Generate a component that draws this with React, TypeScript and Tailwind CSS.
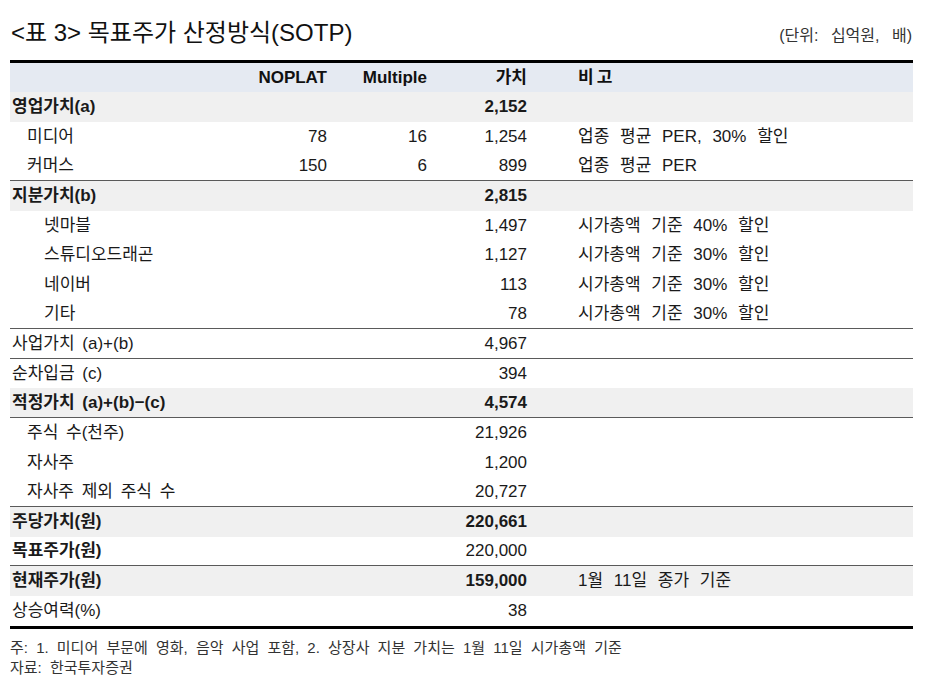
import React from 'react';

type Row = {
    label: string;
    indent?: 0 | 1 | 2;
    bold?: boolean;
    shaded?: boolean;
    boldValue?: boolean;
    noplat?: string;
    multiple?: string;
    value: string;
    note?: string;
    lineBelow?: boolean;
};

const ROWS: Row[] = [
    { label: '영업가치(a)', bold: true, shaded: true, boldValue: true, value: '2,152' },
    { label: '미디어', indent: 1, noplat: '78', multiple: '16', value: '1,254', note: '업종 평균 PER, 30% 할인' },
    { label: '커머스', indent: 1, noplat: '150', multiple: '6', value: '899', note: '업종 평균 PER', lineBelow: true },
    { label: '지분가치(b)', bold: true, shaded: true, boldValue: true, value: '2,815' },
    { label: '넷마블', indent: 2, value: '1,497', note: '시가총액 기준 40% 할인' },
    { label: '스튜디오드래곤', indent: 2, value: '1,127', note: '시가총액 기준 30% 할인' },
    { label: '네이버', indent: 2, value: '113', note: '시가총액 기준 30% 할인' },
    { label: '기타', indent: 2, value: '78', note: '시가총액 기준 30% 할인', lineBelow: true },
    { label: '사업가치 (a)+(b)', value: '4,967', lineBelow: true },
    { label: '순차입금 (c)', value: '394' },
    { label: '적정가치 (a)+(b)−(c)', bold: true, shaded: true, boldValue: true, value: '4,574', lineBelow: true },
    { label: '주식 수(천주)', indent: 1, value: '21,926' },
    { label: '자사주', indent: 1, value: '1,200' },
    { label: '자사주 제외 주식 수', indent: 1, value: '20,727', lineBelow: true },
    { label: '주당가치(원)', bold: true, shaded: true, boldValue: true, value: '220,661' },
    { label: '목표주가(원)', bold: true, value: '220,000', lineBelow: true },
    { label: '현재주가(원)', bold: true, shaded: true, boldValue: true, value: '159,000', note: '1월 11일 종가 기준' },
    { label: '상승여력(%)', value: '38' },
];

const FONT = "font-['Liberation_Sans','Noto_Sans_CJK_KR',sans-serif]";

const TableRow: React.FC<{ row: Row }> = ({ row }) => {
    const indent = row.indent === 2 ? 'pl-[34px]' : row.indent === 1 ? 'pl-[17px]' : 'pl-[2px]';
    return (
        <div
            className={`grid grid-cols-[217px_100px_100px_100px_1fr] items-center h-[29.65px] text-[17px] text-[#1a1a1a]
                ${row.shaded ? 'bg-[#f0f0f0]' : 'bg-white'}
                ${row.lineBelow ? 'border-b border-[#5a5a5a]' : ''}`}
        >
            <div className={`${indent} ${row.bold ? 'font-bold' : ''} whitespace-nowrap [word-spacing:3px]`}>{row.label}</div>
            <div className="text-right">{row.noplat}</div>
            <div className="text-right">{row.multiple}</div>
            <div className={`text-right ${row.boldValue ? 'font-bold' : ''}`}>{row.value}</div>
            <div className="pl-[51px] whitespace-nowrap [word-spacing:6px]">{row.note}</div>
        </div>
    );
};

const App: React.FC = () => {
    return (
        <div className={`w-[943px] h-[696px] bg-white ${FONT}`}>
            {/* Title */}
            <div className="flex items-center justify-between pl-[11px] pr-[31px] h-[60px] pb-[10px]">
                <h1 className="text-[24px] leading-none text-[#111] pt-[16px]">&lt;표 3&gt; 목표주가 산정방식(SOTP)</h1>
                <span className="text-[16px] leading-none text-[#333] pt-[22px] [word-spacing:8px]">(단위: 십억원, 배)</span>
            </div>

            {/* Table */}
            <div className="ml-[10px] w-[903px] border-t-[3px] border-b-[3px] border-black">
                <div className="grid grid-cols-[217px_100px_100px_100px_1fr] items-center h-[29px] bg-[#e5eaf2] text-[17px] font-bold text-[#111]">
                    <div />
                    <div className="text-right">NOPLAT</div>
                    <div className="text-right">Multiple</div>
                    <div className="text-right">가치</div>
                    <div className="pl-[51px] tracking-[3px]">비고</div>
                </div>
                {ROWS.map((row, i) => (
                    <TableRow key={i} row={row} />
                ))}
            </div>

            {/* Notes */}
            <div className="pl-[10px] pt-[9px] text-[15px] leading-[20px] text-[#333] [word-spacing:4px]">
                <p>주: 1. 미디어 부문에 영화, 음악 사업 포함, 2. 상장사 지분 가치는 1월 11일 시가총액 기준</p>
                <p>자료: 한국투자증권</p>
            </div>
        </div>
    );
};

export default App;
